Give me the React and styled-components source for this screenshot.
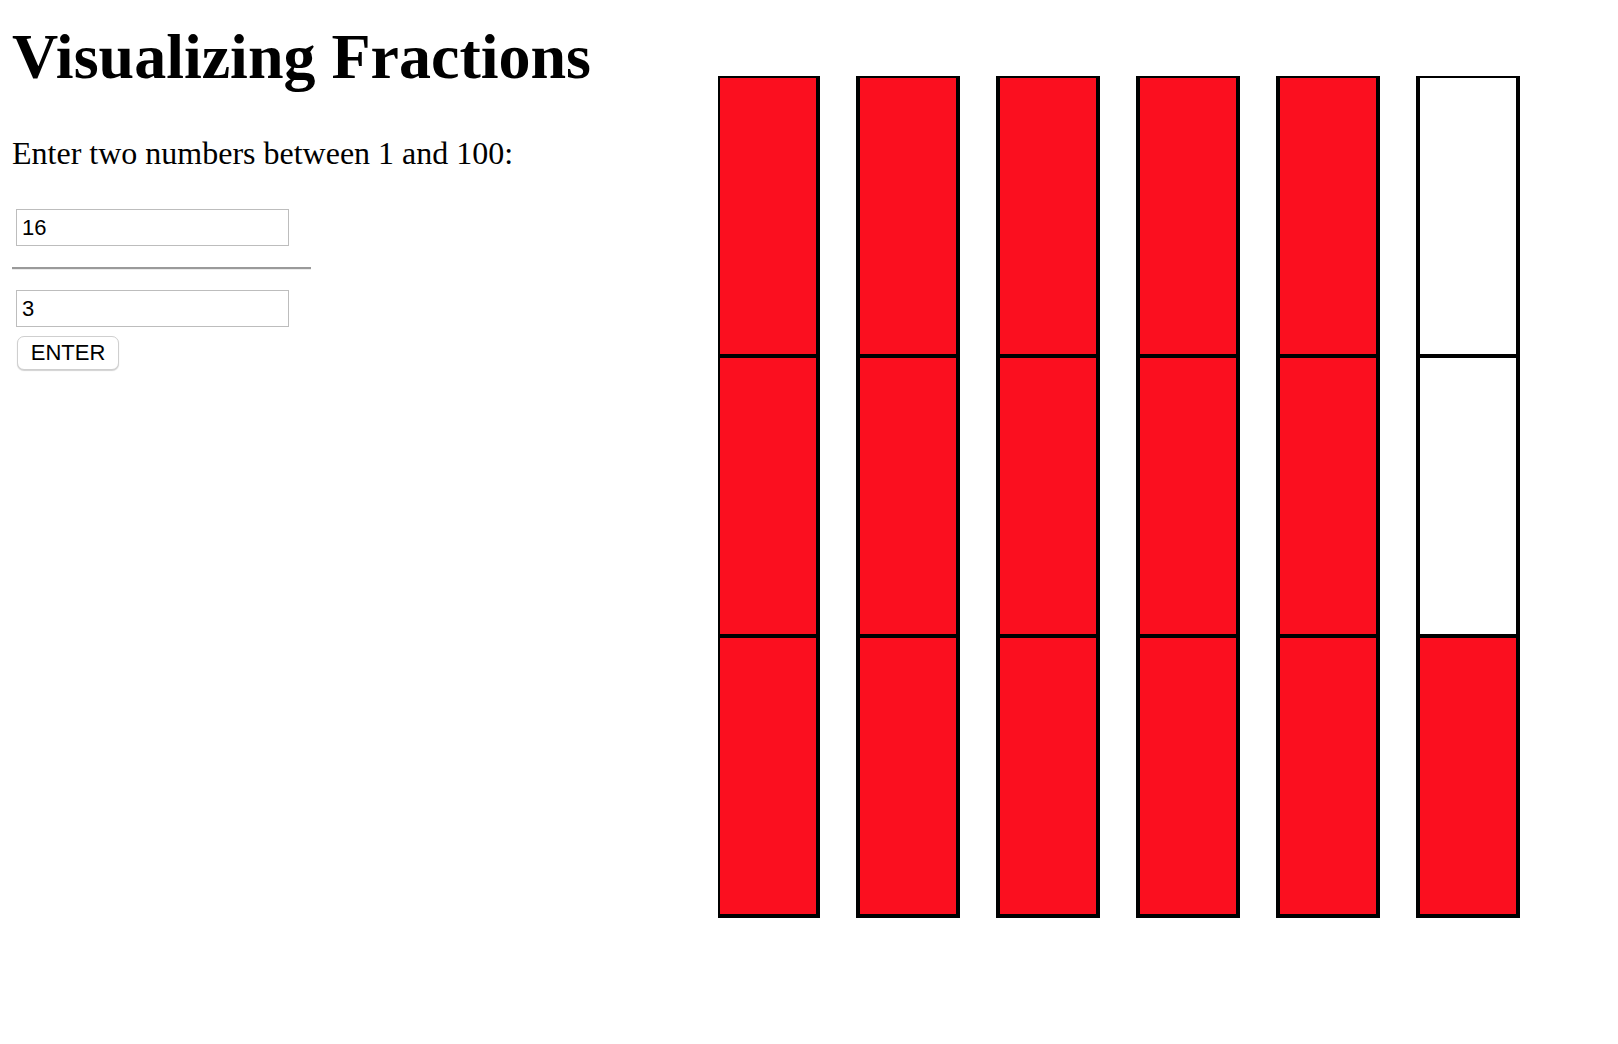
import React, { useState } from "react";
import styled, { createGlobalStyle } from "styled-components";

const GlobalStyle = createGlobalStyle`
  html, body {
    margin: 0;
    padding: 0;
    background: #ffffff;
  }
  body {
    font-family: "Liberation Serif", "Times New Roman", serif;
    color: #000;
  }
`;

const Page = styled.div`
  display: flex;
  align-items: flex-start;
  padding: 20px 0 0 12px;
`;

const LeftPanel = styled.div`
  flex: 0 0 706px;
  display: flex;
  flex-direction: column;
  align-items: flex-start;
`;

const Title = styled.h1`
  margin: 0;
  font-family: "Liberation Serif", "Times New Roman", serif;
  font-size: 64px;
  font-weight: bold;
  line-height: normal;
  white-space: nowrap;
`;

const Prompt = styled.p`
  margin: 41px 0 0;
  font-size: 32px;
  line-height: normal;
`;

const Form = styled.form`
  display: flex;
  flex-direction: column;
  align-items: flex-start;
  margin-top: 37px;
`;

const NumberInput = styled.input`
  box-sizing: border-box;
  width: 273px;
  height: 37px;
  margin: 0 0 0 4px;
  padding: 0 5px;
  border: 1px solid #bdbdbd;
  border-radius: 0;
  font-family: "Liberation Sans", Arial, sans-serif;
  font-size: 22px;
  color: #000;
  background: #fff;
  outline: none;
`;

const Rule = styled.hr`
  box-sizing: border-box;
  width: 299px;
  height: 0;
  margin: 21px 0 20px 0;
  border: none;
  border-top: 2px solid #9a9a9a;
  border-bottom: 1px solid #ececec;
`;

const EnterButton = styled.button`
  box-sizing: border-box;
  width: 102px;
  height: 34px;
  margin: 9px 0 0 5px;
  padding: 0;
  border: 1px solid #cfcfcf;
  border-radius: 7px;
  background: #ffffff;
  box-shadow: 0 1px 1px rgba(0, 0, 0, 0.18);
  font-family: "Liberation Sans", Arial, sans-serif;
  font-size: 22px;
  color: #000;
  cursor: pointer;
`;

const ChartArea = styled.div`
  margin-top: 56px;
  line-height: 0;
`;

const CELL_W = 100;
const CELL_H = 280;
const PITCH = 140;

function FractionChart({ numerator, denominator }) {
  const cols = Math.max(1, Math.ceil(numerator / denominator));
  const width = (cols - 1) * PITCH + CELL_W + 2;
  const height = denominator * CELL_H + 2;
  const rects = [];
  for (let c = 0; c < cols; c++) {
    for (let r = 0; r < denominator; r++) {
      const fromBottom = denominator - 1 - r;
      const filled = c * denominator + fromBottom < numerator;
      rects.push(
        <rect
          key={`${c}-${r}`}
          x={c * PITCH}
          y={r * CELL_H}
          width={CELL_W}
          height={CELL_H}
          fill={filled ? "#fb0f1f" : "#ffffff"}
          stroke="#000"
          strokeWidth="4"
        />
      );
    }
  }
  return (
    <svg width={width} height={height} viewBox={`0 0 ${width} ${height}`}>
      {rects}
    </svg>
  );
}

export default function App() {
  const [num, setNum] = useState("16");
  const [den, setDen] = useState("3");
  const [fraction, setFraction] = useState({ n: 16, d: 3 });

  const submit = (e) => {
    e.preventDefault();
    const n = Math.min(100, Math.max(1, parseInt(num, 10) || 1));
    const d = Math.min(100, Math.max(1, parseInt(den, 10) || 1));
    setFraction({ n, d });
  };

  return (
    <>
      <GlobalStyle />
      <Page>
        <LeftPanel>
          <Title>Visualizing Fractions</Title>
          <Prompt>Enter two numbers between 1 and 100:</Prompt>
          <Form onSubmit={submit}>
            <NumberInput
              type="text"
              value={num}
              onChange={(e) => setNum(e.target.value)}
            />
            <Rule />
            <NumberInput
              type="text"
              value={den}
              onChange={(e) => setDen(e.target.value)}
            />
            <EnterButton type="submit">ENTER</EnterButton>
          </Form>
        </LeftPanel>
        <ChartArea>
          <FractionChart numerator={fraction.n} denominator={fraction.d} />
        </ChartArea>
      </Page>
    </>
  );
}
